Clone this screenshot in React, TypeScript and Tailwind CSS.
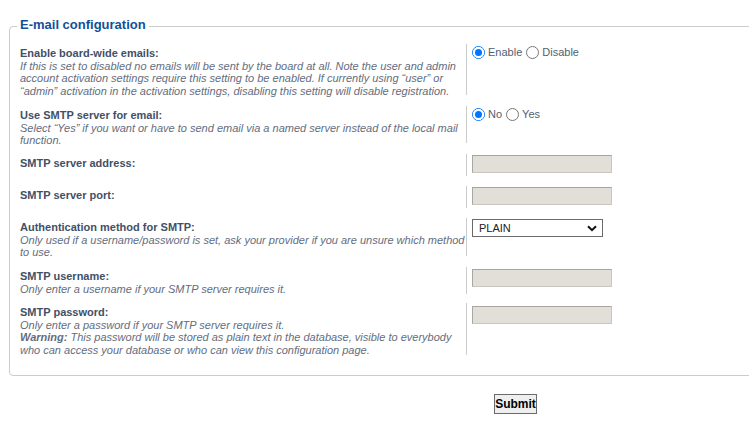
import React from "react";

const font = { fontFamily: '"Liberation Sans", Arial, sans-serif' };

function Row({
  top,
  h,
  label,
  children,
  right,
  rpt = 1,
}: {
  top: number;
  h: number;
  label: string;
  children?: React.ReactNode;
  right: React.ReactNode;
  rpt?: number;
}) {
  return (
    <div className="flex" style={{ marginTop: top, height: h }}>
      <div className="w-[447px] shrink-0 border-r border-[#cccccc] pt-[3px] text-[11px] leading-[12.5px]">
        <div className="font-bold text-[#425067]">{label}</div>
        {children && <div className="italic text-[#636d7e]">{children}</div>}
      </div>
      <div className="pl-[5px]" style={{ paddingTop: rpt }}>
        {right}
      </div>
    </div>
  );
}

function TextBox() {
  return (
    <div className="w-[140px] h-[18px] bg-[#e2ded8] border border-[#c9c5bf] border-t-[#a7a39e] border-l-[#aaa6a1]" />
  );
}

function Radio({ checked, label }: { checked?: boolean; label: string }) {
  return (
    <span className="inline-flex items-center">
      {checked ? (
        <span className="w-[13px] h-[13px] rounded-full border border-[#0075ff] flex items-center justify-center">
          <span className="w-[11px] h-[11px] rounded-full bg-[#0075ff] border-[2px] border-white" />
        </span>
      ) : (
        <span className="w-[13px] h-[13px] rounded-full border border-[#767676] bg-white" />
      )}
      <span className="ml-[3px] text-[11px] text-[#536070]">{label}</span>
    </span>
  );
}

export default function App() {
  return (
    <div className="w-[749px] h-[426px] overflow-hidden bg-white" style={font}>
      <div className="w-[1012px] pl-[9px] pt-[26px]">
        <div className="relative border border-[#cccccc] rounded-[4px] pl-[10px] pt-0 pb-[20px] h-[350px]">
          <span className="absolute left-[7px] top-[-10px] bg-white px-[3px] text-[13px] leading-[15px] font-bold text-[#115098]">
            E-mail configuration
          </span>
          <div className="flex flex-col">
            <Row
              top={17}
              h={51}
              label="Enable board-wide emails:"
              right={
                <div className="flex items-center gap-[4px] -mt-[1px]">
                  <Radio checked label="Enable" />
                  <Radio label="Disable" />
                </div>
              }
            >
              If this is set to disabled no emails will be sent by the board at all. Note the user and admin
              account activation settings require this setting to be enabled. If currently using “user” or
              “admin” activation in the activation settings, disabling this setting will disable registration.
            </Row>
            <Row
              top={11}
              h={37}
              label="Use SMTP server for email:"
              right={
                <div className="flex items-center gap-[4px] -mt-[1px]">
                  <Radio checked label="No" />
                  <Radio label="Yes" />
                </div>
              }
            >
              Select “Yes” if you want or have to send email via a named server instead of the local mail function.
            </Row>
            <Row top={11} h={22} label="SMTP server address:" right={<TextBox />} />
            <Row top={10} h={22} label="SMTP server port:" right={<TextBox />} />
            <Row
              top={10}
              h={38}
              label="Authentication method for SMTP:"
              right={
                <div className="w-[131px] h-[18px] border border-[#6a6a6a] bg-white flex items-center justify-between pl-[6px] pr-[5px]">
                  <span className="text-[11px] text-[#222]">PLAIN</span>
                  <svg width="10" height="7" viewBox="0 0 10 7">
                    <path d="M1 1.2 L5 5.2 L9 1.2" fill="none" stroke="#111" strokeWidth="2" />
                  </svg>
                </div>
              }
            >
              Only used if a username/password is set, ask your provider if you are unsure which method to use.
            </Row>
            <Row top={11} h={27} rpt={2} label="SMTP username:" right={<TextBox />}>
              Only enter a username if your SMTP server requires it.
            </Row>
            <Row top={9} h={52} rpt={3} label="SMTP password:" right={<TextBox />}>
              Only enter a password if your SMTP server requires it.
              <br />
              <b>Warning:</b> This password will be stored as plain text in the database, visible to everybody
              who can access your database or who can view this configuration page.
            </Row>
          </div>
        </div>
        <div className="flex pt-[18px] pl-[485px]">
          <button className="w-[43px] h-[20px] bg-[#efefef] border border-[#6b6b6b] text-[12px] font-bold text-black leading-none">
            Submit
          </button>
        </div>
      </div>
    </div>
  );
}
